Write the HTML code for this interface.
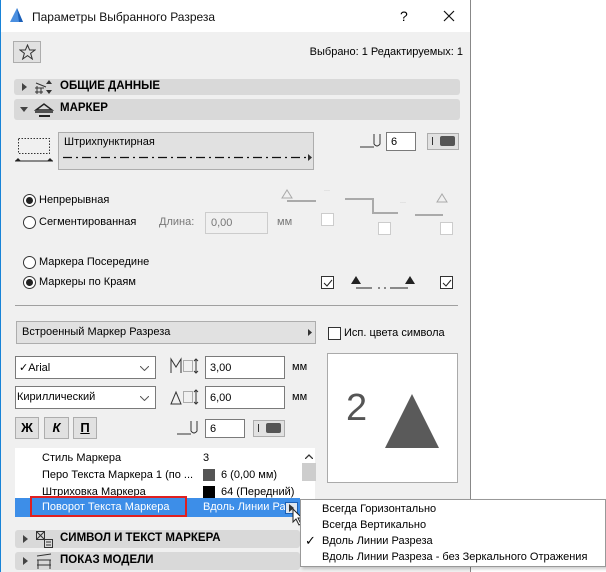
<!DOCTYPE html>
<html><head><meta charset="utf-8"><style>
*{margin:0;padding:0;box-sizing:border-box}
body{width:606px;height:572px;background:#fff;position:relative;overflow:hidden;font-family:"Liberation Sans",sans-serif;font-size:11px;color:#000}
.a{position:absolute}
.dlg{left:0;top:0;width:471px;height:572px;background:#f0f0f0;border-left:1px solid #1883d7;border-right:1px solid #888}
.tb{left:1px;top:0;width:469px;height:32px;background:#fff}
.hdr{position:absolute;left:14px;width:446px;background:#d9d9d9;border-radius:3px;font-weight:bold;font-size:11.5px}
.fld{position:absolute;background:#fff;border:1px solid #7a7a7a;padding-left:4px;font-size:11px}
.btn{position:absolute;background:#e1e1e1;border:1px solid #adadad}
.rad{position:absolute;width:13px;height:13px;border:1px solid #333;border-radius:50%;background:#fff}
.rad.on::after{content:"";position:absolute;left:2px;top:2px;width:7px;height:7px;border-radius:50%;background:#222}
.cb{position:absolute;width:13px;height:13px;border:1px solid #333;background:#fff}
.cbg{position:absolute;width:13px;height:13px;border:1px solid #ccc;background:#fff}
.t{position:absolute;white-space:nowrap}
.dd{position:absolute;background:#fff;border:1px solid #7a7a7a;padding-left:5px;font-size:11px}
</style></head><body>
<div class="a dlg"></div>
<div class="a tb"></div>
<svg class="a" style="left:9px;top:7px" width="16" height="16"><path d="M1 15 L8 1 L14 15 Z" fill="#4a8fe0"/><path d="M8 1 L14 15 L10 15 Z" fill="#1b5fb7"/></svg>
<div class="t" style="left:32px;top:10px;font-size:12px;color:#111">Параметры Выбранного Разреза</div>
<div class="t" style="left:400px;top:8px;font-size:14px">?</div>
<svg class="a" style="left:443px;top:10px" width="12" height="12"><path d="M1 1L11 11M11 1L1 11" stroke="#111" stroke-width="1.2"/></svg>

<div class="btn" style="left:13px;top:41px;width:28px;height:22px"></div>
<svg class="a" style="left:19px;top:44px" width="17" height="16"><path d="M8.5 1L10.6 6H16L11.6 9.3L13.3 15L8.5 11.6L3.7 15L5.4 9.3L1 6H6.4Z" fill="none" stroke="#333"/></svg>
<div class="t" style="right:143px;top:46px">Выбрано: 1 Редактируемых: 1</div>

<div class="hdr" style="top:79px;height:16px"><div class="t" style="left:46px;top:1px">ОБЩИЕ ДАННЫЕ</div></div>
<svg class="a" style="left:22px;top:83px" width="5" height="8"><path d="M0 0L5 4L0 8Z" fill="#444"/></svg>
<svg class="a" style="left:34px;top:79px" width="20" height="16"><path d="M2 4L12 8M1 9H10M3 7V15M7 9V15M1 13H9" stroke="#333" fill="none"/><path d="M15 1L18 5H12Z M15 15L18 11H12Z" fill="#333"/></svg>
<div class="hdr" style="top:99px;height:21px"><div class="t" style="left:46px;top:3px">МАРКЕР</div></div>
<svg class="a" style="left:20px;top:107px" width="8" height="5"><path d="M0 0H8L4 5Z" fill="#444"/></svg>
<svg class="a" style="left:34px;top:102px" width="20" height="16"><path d="M2 8L10 2L18 8Z" fill="none" stroke="#222" stroke-width="1.5"/><path d="M1 10H19" stroke="#222" stroke-width="1.5"/><path d="M5 14H16" stroke="#222" stroke-width="2"/></svg>

<svg class="a" style="left:15px;top:136px" width="38" height="28"><rect x="3.5" y="2.5" width="31" height="15" fill="none" stroke="#333" stroke-dasharray="1.5,1.5"/><path d="M0 25H38" stroke="#222"/><path d="M0 25L3 22L6 25Z M32 25L35 22L38 25Z" fill="#222"/></svg>
<div class="btn" style="left:58px;top:132px;width:256px;height:38px"><div class="t" style="left:5px;top:3px">Штрихпунктирная</div>
<svg class="a" style="left:4px;top:20px" width="250" height="9"><path d="M0 4.5H243" stroke="#111" stroke-width="1.3" stroke-dasharray="9,4,2,4"/><path d="M245 1L249 4.5L245 8Z" fill="#333"/></svg></div>
<svg class="a" style="left:360px;top:132px" width="22" height="18"><path d="M0 15H14M14 2V12Q17 16 20 12V2" fill="none" stroke="#333"/></svg>
<div class="fld" style="left:386px;top:132px;width:30px;height:19px;padding-top:3px">6</div>
<div class="btn" style="left:427px;top:133px;width:32px;height:17px"></div>
<div class="a" style="left:432px;top:137px;width:1px;height:8px;background:#333"></div>
<div class="a" style="left:440px;top:136px;width:15px;height:10px;background:#555;border-radius:2px"></div>

<div class="rad on" style="left:23px;top:194px"></div><div class="t" style="left:39px;top:194px">Непрерывная</div>
<div class="rad" style="left:23px;top:216px"></div><div class="t" style="left:39px;top:216px">Сегментированная</div>
<div class="t" style="left:159px;top:216px;color:#777">Длина:</div>
<div class="a" style="left:205px;top:212px;width:63px;height:22px;border:1px solid #ccc;background:#f0f0f0"><div class="t" style="left:5px;top:4px;color:#777">0,00</div></div>
<div class="t" style="left:277px;top:216px;color:#777">мм</div>
<svg class="a" style="left:280px;top:185px" width="180" height="55"><path d="M2 13L7 5L12 13Z" fill="none" stroke="#aaa"/><path d="M7 16H36M65 14H93V28H118M135 30H163" fill="none" stroke="#aaa" stroke-width="2"/><path d="M157 17L162 9L167 17Z" fill="none" stroke="#aaa"/><text x="44" y="7" font-size="6" fill="#aaa">···</text><text x="120" y="19" font-size="6" fill="#aaa">···</text></svg>
<div class="cbg" style="left:321px;top:213px"></div><div class="cbg" style="left:378px;top:222px"></div><div class="cbg" style="left:440px;top:222px"></div>

<div class="rad" style="left:23px;top:256px"></div><div class="t" style="left:39px;top:256px">Маркера Посередине</div>
<div class="rad on" style="left:23px;top:276px"></div><div class="t" style="left:39px;top:276px">Маркеры по Краям</div>
<div class="cb" style="left:321px;top:276px"></div><svg class="a" style="left:323px;top:279px" width="10" height="8"><path d="M1 4L4 7L9 1" fill="none" stroke="#222"/></svg>
<div class="cb" style="left:440px;top:276px"></div><svg class="a" style="left:442px;top:279px" width="10" height="8"><path d="M1 4L4 7L9 1" fill="none" stroke="#222"/></svg>
<svg class="a" style="left:350px;top:272px" width="70" height="18"><path d="M1 12L6 4L11 12Z M55 12L60 4L65 12Z" fill="#222"/><path d="M6 16H22M28 16H30M34 16H36M40 16H58" stroke="#222"/></svg>

<div class="a" style="left:15px;top:305px;width:443px;height:1px;background:#a0a0a0"></div>
<div class="btn" style="left:16px;top:321px;width:300px;height:23px"><div class="t" style="left:5px;top:4px">Встроенный Маркер Разреза</div><svg class="a" style="left:291px;top:7px" width="4" height="7"><path d="M0 0L4 3.5L0 7Z" fill="#333"/></svg></div>
<div class="cb" style="left:328px;top:327px"></div><div class="t" style="left:344px;top:327px">Исп. цвета символа</div>

<div class="dd" style="left:15px;top:356px;width:141px;height:23px"><div class="t" style="left:3px;top:4px">✓Arial</div><svg class="a" style="left:124px;top:9px" width="9" height="5"><path d="M0 0L4.5 4.5L9 0" fill="none" stroke="#555"/></svg></div>
<svg class="a" style="left:170px;top:357px" width="30" height="18"><path d="M1 16V2L6 10L11 2V16" fill="none" stroke="#333"/><rect x="13.5" y="3.5" width="9" height="11" fill="none" stroke="#666" stroke-dasharray="1,1"/><path d="M26 2V16M24 4L26 2L28 4M24 14L26 16L28 14" fill="none" stroke="#333"/></svg>
<div class="fld" style="left:205px;top:356px;width:80px;height:23px;padding-top:5px">3,00</div>
<div class="t" style="left:292px;top:361px">мм</div>

<div class="dd" style="left:15px;top:386px;width:141px;height:23px"><div class="t" style="left:1px;top:4px">Кириллический</div><svg class="a" style="left:124px;top:9px" width="9" height="5"><path d="M0 0L4.5 4.5L9 0" fill="none" stroke="#555"/></svg></div>
<svg class="a" style="left:170px;top:388px" width="30" height="18"><path d="M1 16L6 4L11 16Z" fill="none" stroke="#333"/><rect x="13.5" y="3.5" width="9" height="11" fill="none" stroke="#666" stroke-dasharray="1,1"/><path d="M26 2V16M24 4L26 2L28 4M24 14L26 16L28 14" fill="none" stroke="#333"/></svg>
<div class="fld" style="left:205px;top:386px;width:80px;height:23px;padding-top:5px">6,00</div>
<div class="t" style="left:292px;top:391px">мм</div>

<div class="btn" style="left:15px;top:417px;width:24px;height:22px;font-weight:bold;font-size:13px;text-align:center;line-height:20px">Ж</div>
<div class="btn" style="left:44px;top:417px;width:25px;height:22px;font-weight:bold;font-style:italic;font-size:13px;text-align:center;line-height:20px">К</div>
<div class="btn" style="left:73px;top:417px;width:24px;height:22px;font-weight:bold;font-size:13px;text-align:center;line-height:20px;text-decoration:underline">П</div>
<svg class="a" style="left:177px;top:419px" width="22" height="18"><path d="M0 15H14M14 2V12Q17 16 20 12V2" fill="none" stroke="#333"/></svg>
<div class="fld" style="left:205px;top:419px;width:40px;height:19px;padding-top:3px">6</div>
<div class="btn" style="left:253px;top:420px;width:32px;height:17px"></div>
<div class="a" style="left:258px;top:424px;width:1px;height:8px;background:#333"></div>
<div class="a" style="left:266px;top:423px;width:15px;height:10px;background:#555;border-radius:2px"></div>

<div class="a" style="left:327px;top:353px;width:131px;height:130px;background:#fff;border:1px solid #aaa"></div>
<div class="t" style="left:346px;top:387px;font-size:38px;color:#555">2</div>
<svg class="a" style="left:384px;top:393px" width="56" height="56"><path d="M28 1L55 55H1Z" fill="#5a5a5a"/></svg>

<div class="a" style="left:15px;top:448px;width:300px;height:69px;background:#fff"></div>
<div class="a" style="left:302px;top:463px;width:14px;height:18px;background:#cdcdcd"></div>
<svg class="a" style="left:305px;top:454px" width="8" height="5"><path d="M0 5L4 1L8 5" fill="none" stroke="#333" stroke-width="1.3"/></svg>
<div class="t" style="left:42px;top:452px">Стиль Маркера</div><div class="t" style="left:203px;top:452px">3</div>
<div class="t" style="left:42px;top:469px">Перо Текста Маркера 1 (по ...</div><div class="a" style="left:203px;top:469px;width:12px;height:12px;background:#555"></div><div class="t" style="left:221px;top:469px">6 (0,00 мм)</div>
<div class="t" style="left:42px;top:486px">Штриховка Маркера</div><div class="a" style="left:203px;top:486px;width:12px;height:12px;background:#000"></div><div class="t" style="left:221px;top:486px;width:77px;overflow:hidden">64 (Передний)</div>
<div class="a" style="left:15px;top:498px;width:285px;height:19px;background:#3d8ee8"></div>
<div class="a" style="left:30px;top:496px;width:157px;height:21px;border:2px solid #e02020"></div>
<div class="t" style="left:42px;top:501px;color:#fff">Поворот Текста Маркера</div>
<div class="t" style="left:203px;top:501px;color:#fff;width:82px;overflow:hidden">Вдоль Линии Разреза</div>
<div class="a" style="left:285px;top:502px;width:13px;height:12px;background:#dfe6ee;border:1px solid #1a5fb4"></div>
<svg class="a" style="left:289px;top:504px" width="5" height="8"><path d="M0 0L5 4L0 8Z" fill="#333"/></svg>
<svg class="a" style="left:292px;top:508px" width="12" height="18"><path d="M1 1V14L4 11L7 17L9 16L6 10H10Z" fill="#fff" stroke="#222"/></svg>

<div class="hdr" style="top:530px;height:18px;left:15px;width:285px"><div class="t" style="left:45px;top:2px">СИМВОЛ И ТЕКСТ МАРКЕРА</div></div>
<svg class="a" style="left:23px;top:535px" width="5" height="8"><path d="M0 0L5 4L0 8Z" fill="#444"/></svg>
<svg class="a" style="left:35px;top:530px" width="18" height="18"><rect x="1.5" y="1.5" width="8" height="8" fill="none" stroke="#333"/><path d="M2 2L9 9M9 2L2 9" stroke="#333"/><rect x="9.5" y="9.5" width="8" height="8" fill="none" stroke="#333"/><path d="M11 12H16M11 15H16" stroke="#333"/></svg>
<div class="hdr" style="top:552px;height:18px;left:15px;width:285px"><div class="t" style="left:45px;top:2px">ПОКАЗ МОДЕЛИ</div></div>
<svg class="a" style="left:23px;top:557px" width="5" height="8"><path d="M0 0L5 4L0 8Z" fill="#444"/></svg>
<svg class="a" style="left:35px;top:552px" width="18" height="18"><path d="M2 4L16 2M2 8H16M3 8V17M15 8V17M2 13H16" stroke="#333" fill="none"/></svg>

<div class="a" style="left:300px;top:499px;width:306px;height:68px;background:#fff;border:1px solid #999;box-shadow:2px 2px 3px rgba(0,0,0,.2)"></div>
<div class="t" style="left:322px;top:503px">Всегда Горизонтально</div>
<div class="t" style="left:322px;top:519px">Всегда Вертикально</div>
<div class="t" style="left:305px;top:533px;font-size:13px">✓</div>
<div class="t" style="left:322px;top:535px">Вдоль Линии Разреза</div>
<div class="t" style="left:322px;top:551px">Вдоль Линии Разреза - без Зеркального Отражения</div>
</body></html>
